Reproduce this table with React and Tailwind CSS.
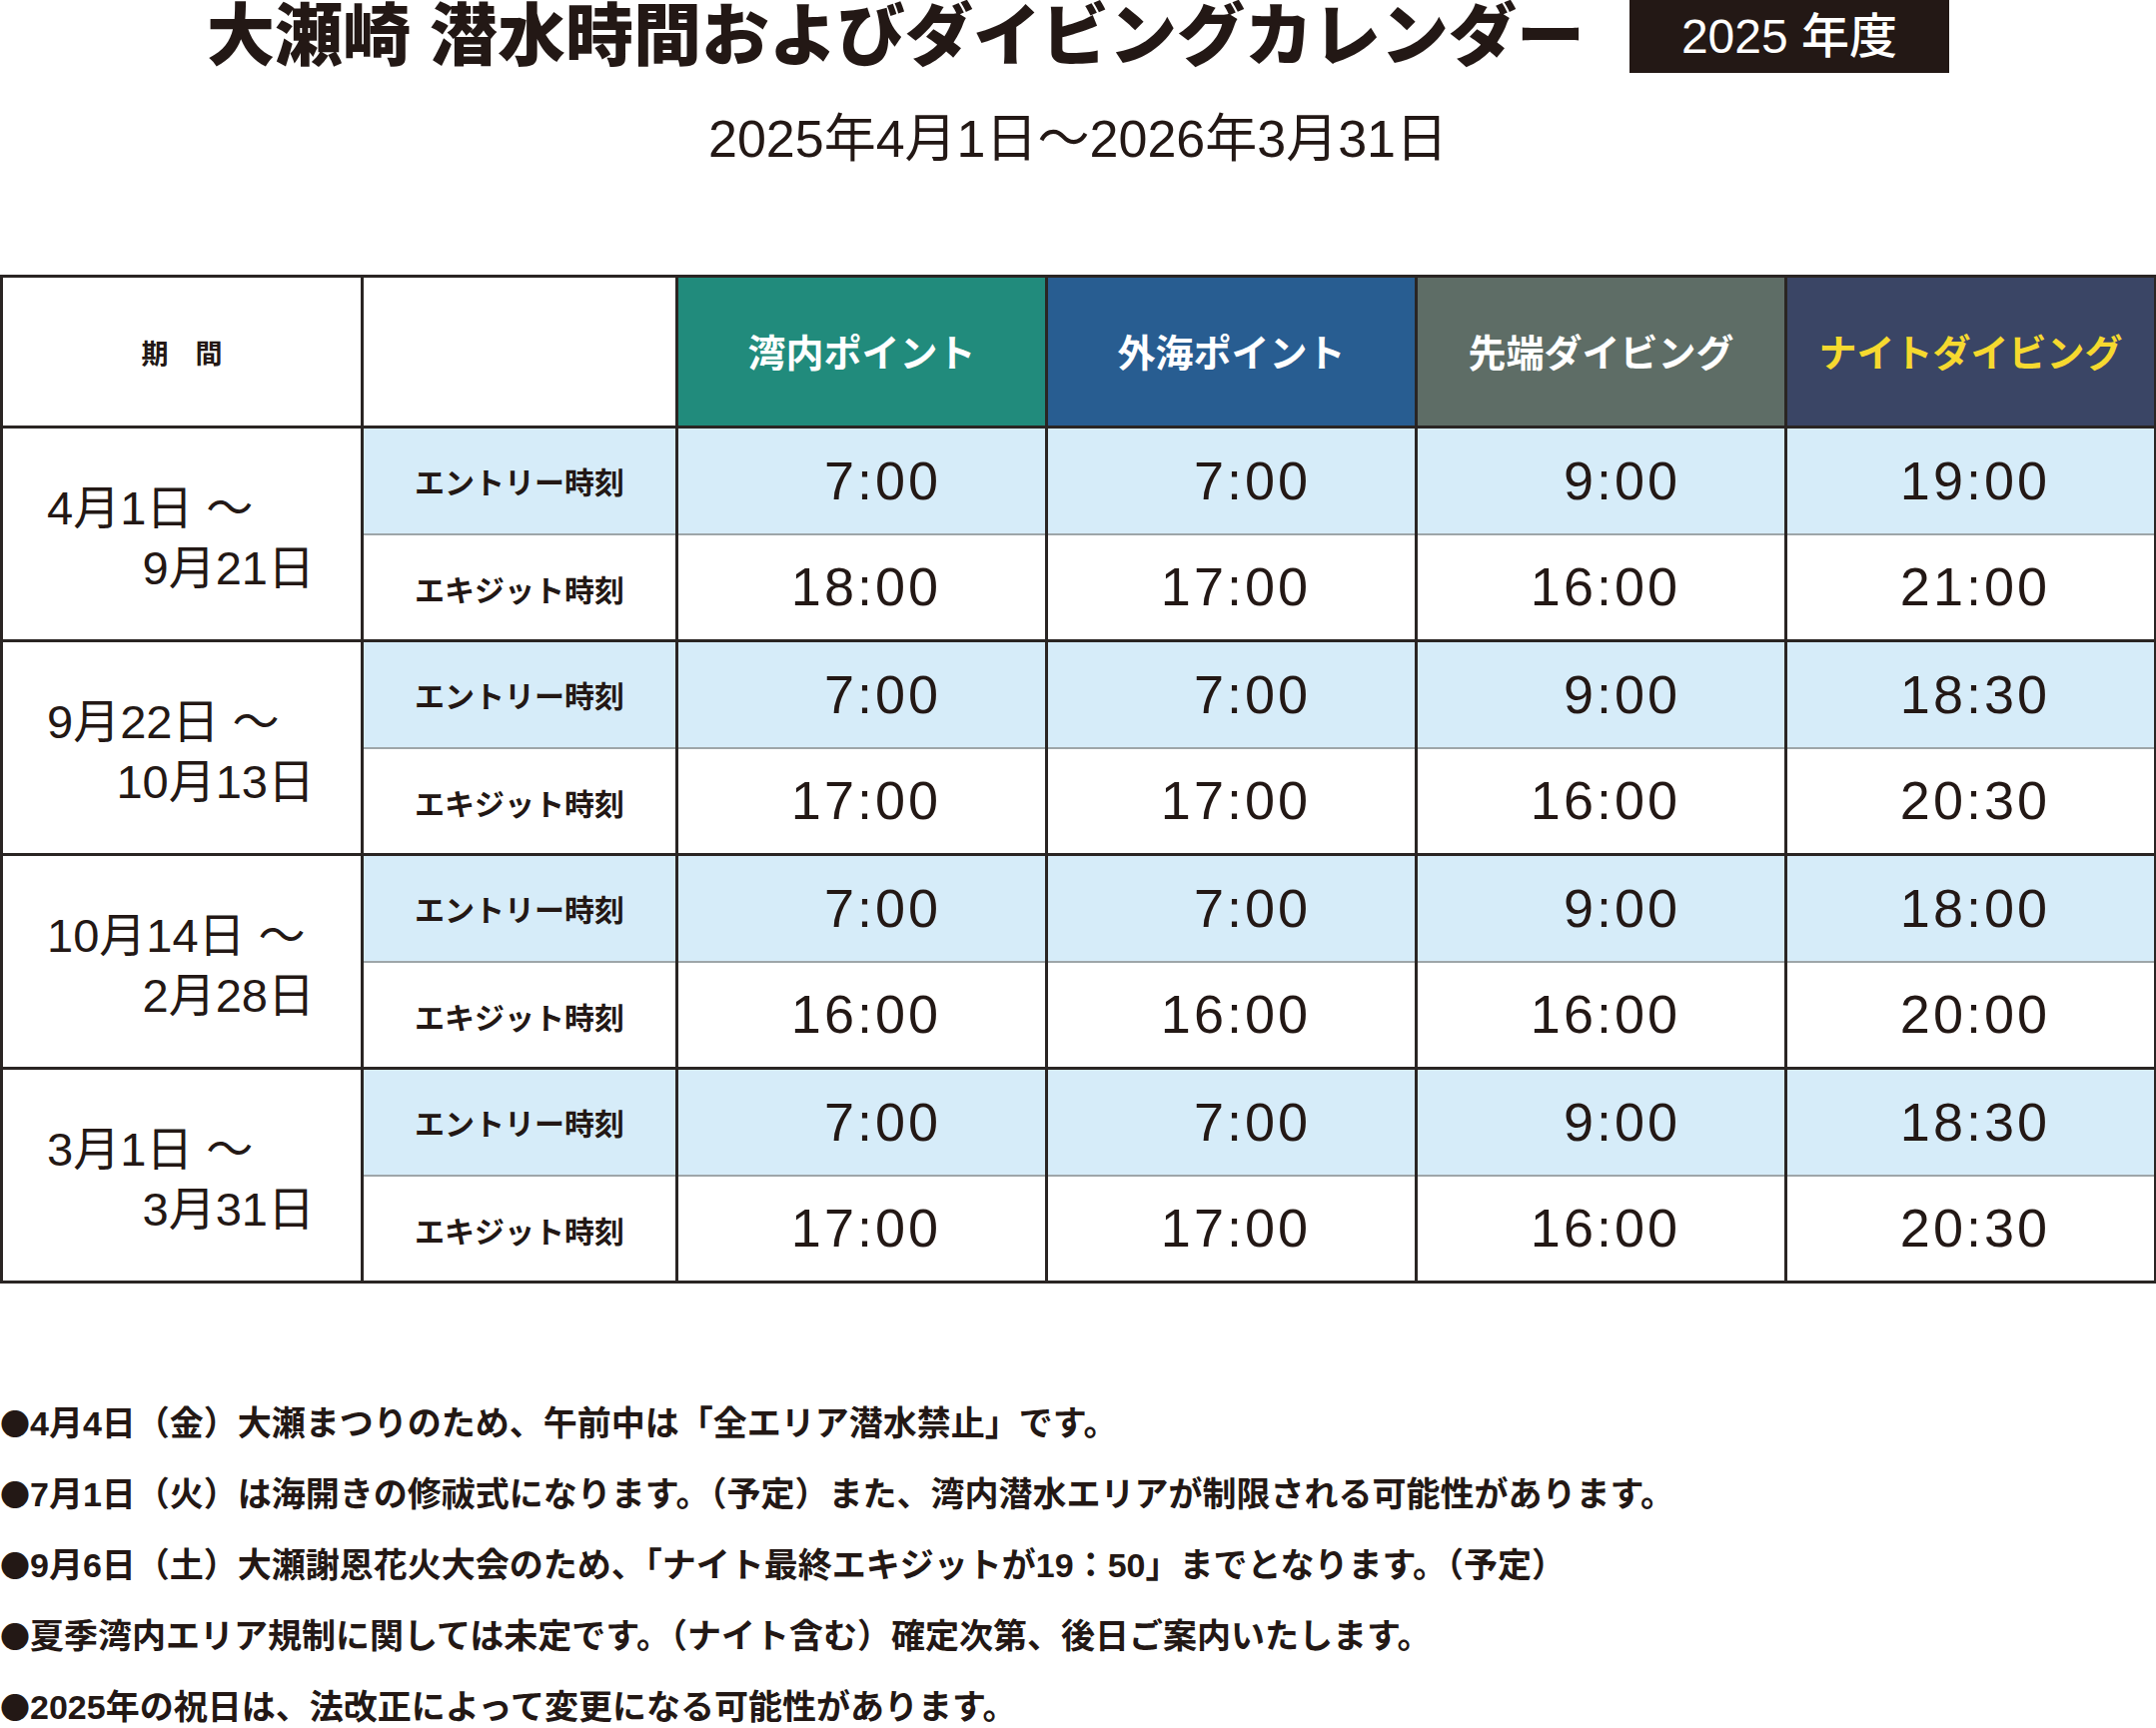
import React from 'react';

const font = { fontFamily: "'Liberation Sans', 'Noto Sans CJK JP', sans-serif" };

const headers = [
  { label: '湾内ポイント', bg: 'bg-[#218b7c]', text: 'text-white' },
  { label: '外海ポイント', bg: 'bg-[#285d91]', text: 'text-white' },
  { label: '先端ダイビング', bg: 'bg-[#5e6d66]', text: 'text-white' },
  { label: 'ナイトダイビング', bg: 'bg-[#3a4565]', text: 'text-[#f6d92f]' },
];

const periods = [
  { from: '4月1日 ～', to: '9月21日', entry: ['7:00', '7:00', '9:00', '19:00'], exit: ['18:00', '17:00', '16:00', '21:00'] },
  { from: '9月22日 ～', to: '10月13日', entry: ['7:00', '7:00', '9:00', '18:30'], exit: ['17:00', '17:00', '16:00', '20:30'] },
  { from: '10月14日 ～', to: '2月28日', entry: ['7:00', '7:00', '9:00', '18:00'], exit: ['16:00', '16:00', '16:00', '20:00'] },
  { from: '3月1日 ～', to: '3月31日', entry: ['7:00', '7:00', '9:00', '18:30'], exit: ['17:00', '17:00', '16:00', '20:30'] },
];

const notes = [
  '4月4日（金）大瀬まつりのため、午前中は「全エリア潜水禁止」です。',
  '7月1日（火）は海開きの修祓式になります。（予定）また、湾内潜水エリアが制限される可能性があります。',
  '9月6日（土）大瀬謝恩花火大会のため、「ナイト最終エキジットが19：50」までとなります。（予定）',
  '夏季湾内エリア規制に関しては未定です。（ナイト含む）確定次第、後日ご案内いたします。',
  '2025年の祝日は、法改正によって変更になる可能性があります。',
];

const cell = 'border-x-[3px] border-[#2a2523]';

export default function App() {
  return (
    <div className="w-[2158px] bg-white text-[#231815]" style={font}>
      <div className="flex items-center justify-center gap-[45px] h-[73px]">
        <h1 className="text-[68px] font-black leading-[73px]">大瀬崎 潜水時間およびダイビングカレンダー</h1>
        <div className="w-[320px] h-[73px] bg-[#231815] text-white text-[48px] font-medium flex items-center justify-center">
          2025 年度
        </div>
      </div>
      <p className="mt-[36px] text-center text-[52px] leading-[60px]">2025年4月1日～2026年3月31日</p>

      <table className="mt-[106px] w-full table-fixed border-collapse border-[3px] border-[#2a2523]">
        <colgroup>
          <col className="w-[361px]" />
          <col className="w-[315px]" />
          <col className="w-[370px]" />
          <col className="w-[370px]" />
          <col className="w-[370px]" />
          <col className="w-[370px]" />
        </colgroup>
        <thead>
          <tr className="h-[151px] border-b-[3px] border-[#2a2523]">
            <th className={`${cell} text-[27px] font-bold pt-[6px]`}>期　間</th>
            <th className={cell}></th>
            {headers.map((h) => (
              <th key={h.label} className={`${cell} ${h.bg} ${h.text} text-[38px] font-bold pt-[4px]`}>
                {h.label}
              </th>
            ))}
          </tr>
        </thead>
        <tbody>
          {periods.map((p) => (
            <React.Fragment key={p.from}>
              <tr className="h-[107px] border-t-[3px] border-[#2a2523]">
                <td rowSpan={2} className={`${cell} pl-[44px] pr-[46px] align-middle`}>
                  <div className="flex flex-col text-[47px] leading-[60px] pt-[8px]">
                    <span className="self-start">{p.from}</span>
                    <span className="self-end">{p.to}</span>
                  </div>
                </td>
                <td className={`${cell} bg-[#d6ecf9] border-b-2 border-b-[#9ea6a9] text-center text-[30px] font-bold pt-[4px]`}>
                  エントリー時刻
                </td>
                {p.entry.map((t, i) => (
                  <td
                    key={i}
                    className={`${cell} bg-[#d6ecf9] border-b-2 border-b-[#9ea6a9] text-right pr-[104px] text-[54px] tracking-[3px]`}
                  >
                    {t}
                  </td>
                ))}
              </tr>
              <tr className="h-[107px]">
                <td className={`${cell} text-center text-[30px] font-bold pt-[8px]`}>エキジット時刻</td>
                {p.exit.map((t, i) => (
                  <td key={i} className={`${cell} text-right pr-[104px] text-[54px] tracking-[3px]`}>
                    {t}
                  </td>
                ))}
              </tr>
            </React.Fragment>
          ))}
        </tbody>
      </table>

      <div className="mt-[104px] text-[34px] leading-[70px] font-semibold">
        {notes.map((n) => (
          <p key={n}>
            <span className="text-[30px]" style={{ fontFamily: "'Noto Sans CJK JP', sans-serif" }}>●</span>
            {n}
          </p>
        ))}
      </div>
    </div>
  );
}
